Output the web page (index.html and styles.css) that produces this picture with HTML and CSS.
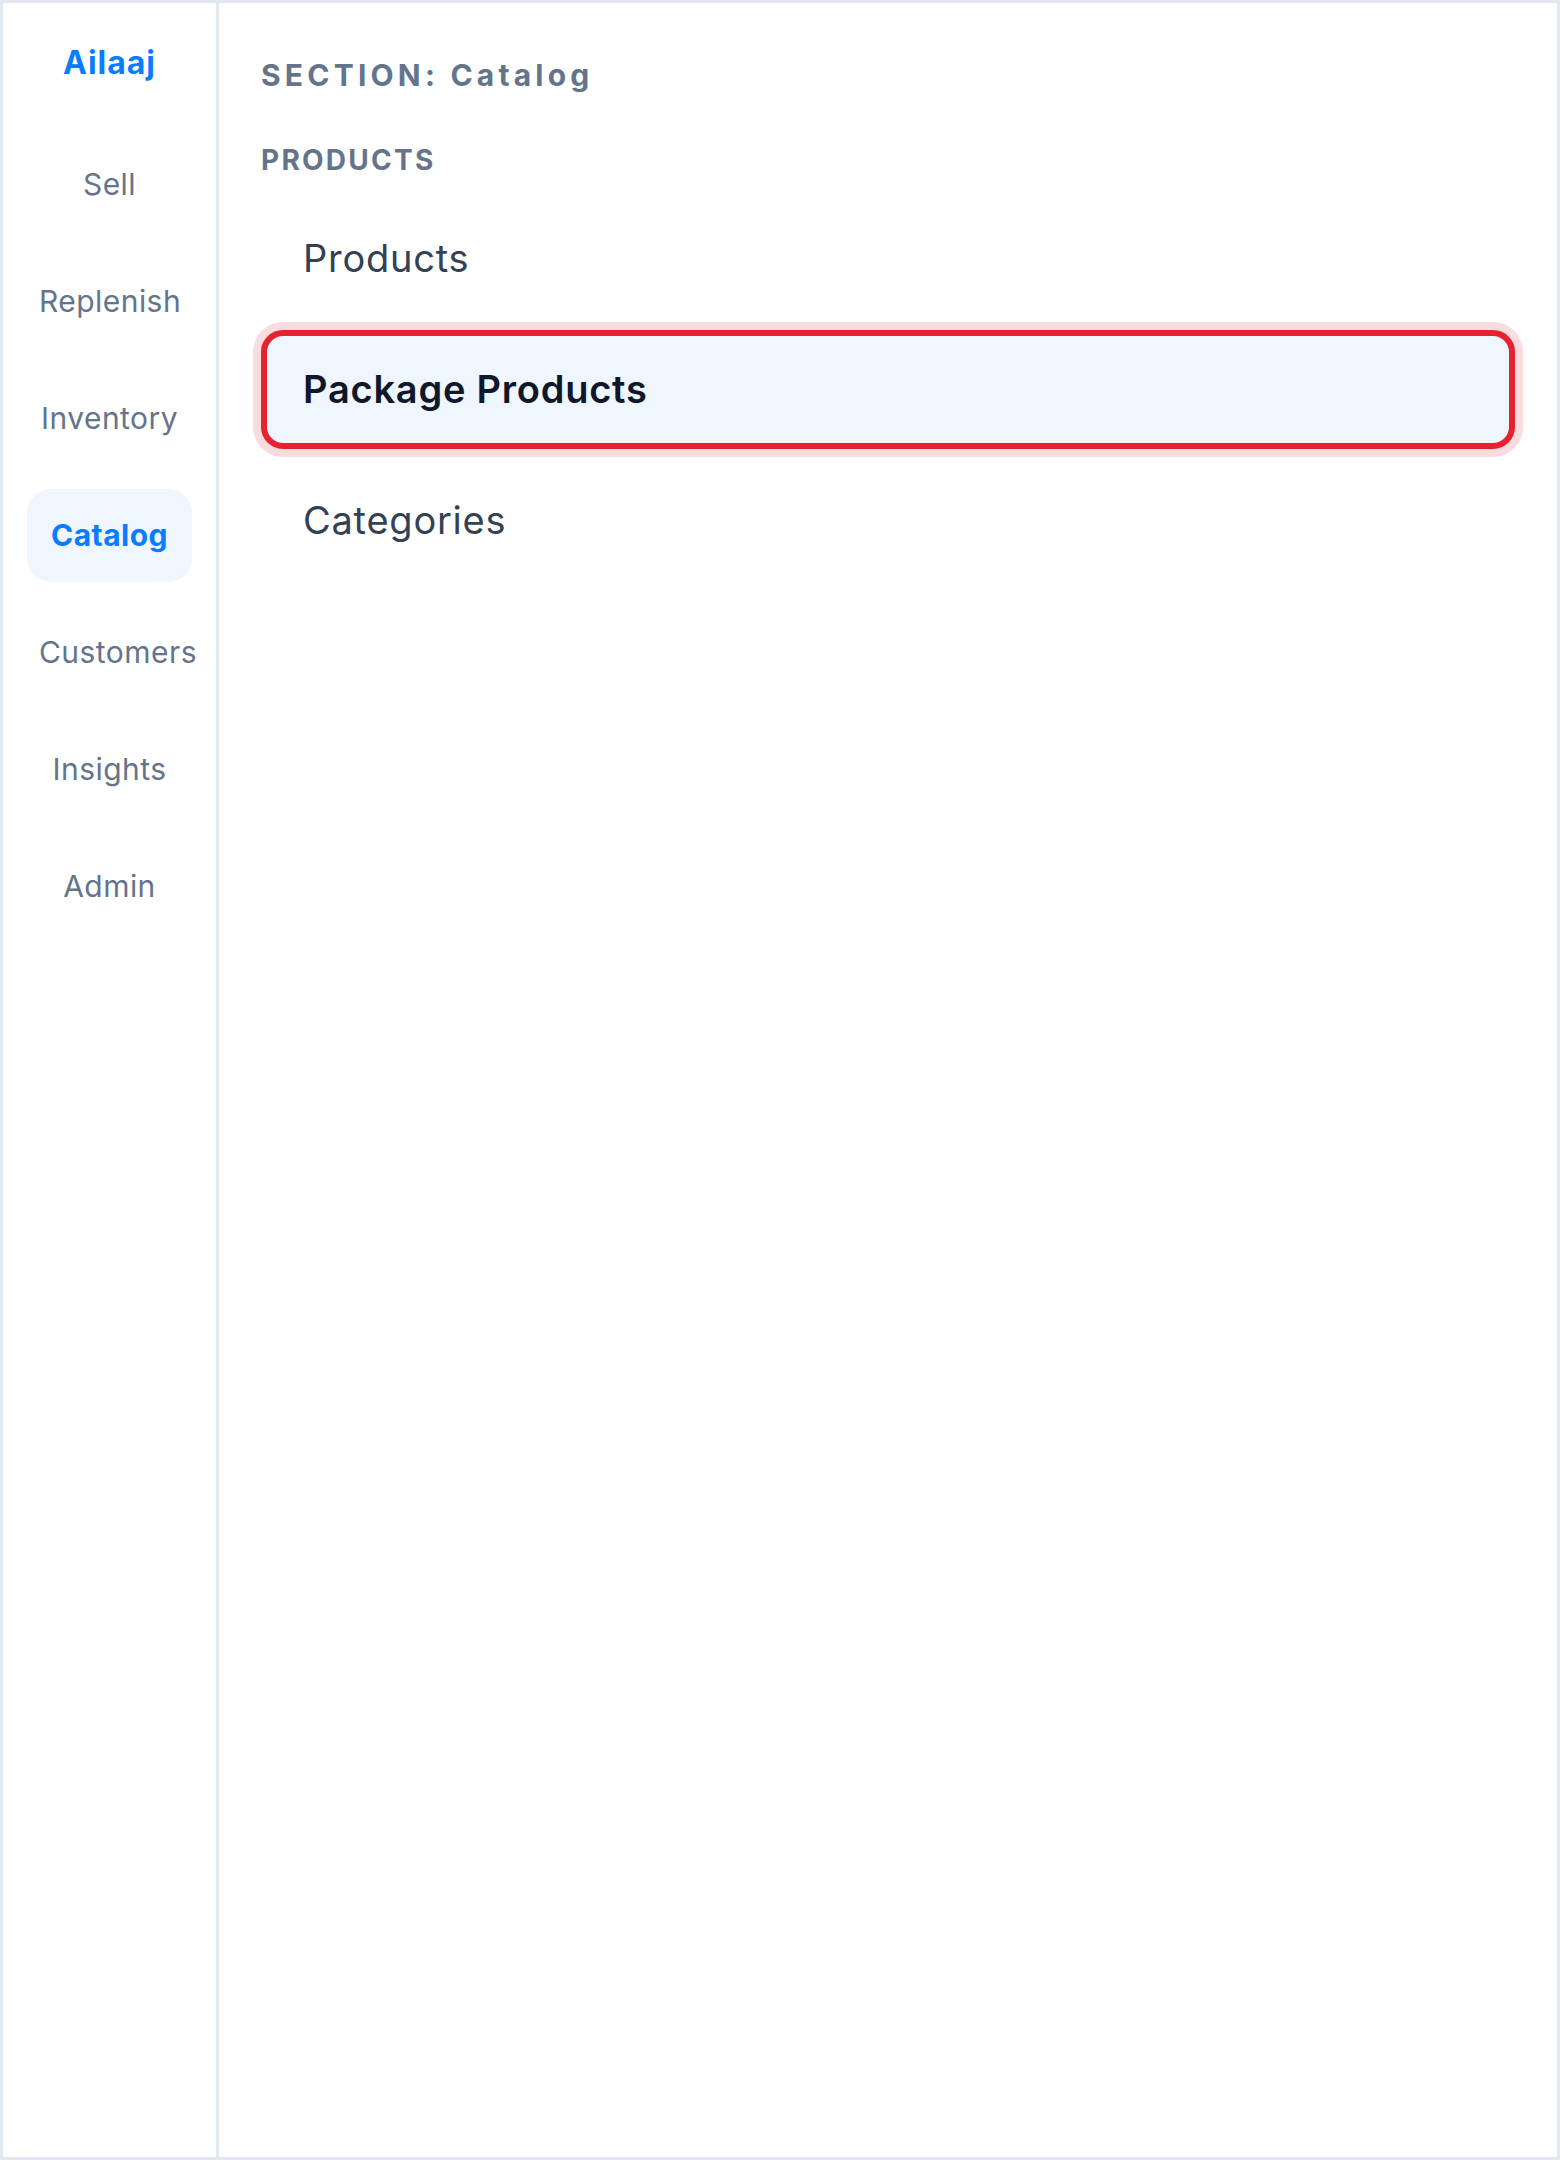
FILE: index.html
```html
<!DOCTYPE html>
<html lang="en">
<head>
<meta charset="utf-8">
<title>Ailaaj - Catalog</title>
<link rel="stylesheet" href="styles.css">
</head>
<body>
<div class="app">
  <aside class="sidebar">
    <div class="brand">Ailaaj</div>
    <nav class="nav">
      <a class="nav-item">Sell</a>
      <a class="nav-item">Replenish</a>
      <a class="nav-item">Inventory</a>
      <a class="nav-item active">Catalog</a>
      <a class="nav-item">Customers</a>
      <a class="nav-item">Insights</a>
      <a class="nav-item">Admin</a>
    </nav>
  </aside>
  <main class="main">
    <h1 class="section-title">SECTION: Catalog</h1>
    <h2 class="group-title">PRODUCTS</h2>
    <ul class="menu">
      <li class="menu-item">Products</li>
      <li class="menu-item selected">Package Products</li>
      <li class="menu-item">Categories</li>
    </ul>
  </main>
</div>
</body>
</html>
```

FILE: styles.css
```css
* { box-sizing: border-box; }

html, body {
  margin: 0;
  padding: 0;
  background: #ffffff;
}

body {
  font-family: Inter, "Noto Sans", "Liberation Sans", sans-serif;
}

.app {
  display: flex;
  width: 1560px;
  height: 2160px;
  border: 3px solid #e2e8f0;
  background: #ffffff;
}

.sidebar {
  flex: 0 0 216px;
  width: 216px;
  min-width: 0;
  border-right: 3px solid #e2e8f0;
  padding: 36px 24px 0;
  display: flex;
  flex-direction: column;
}

.brand {
  font-size: 32px;
  line-height: 48px;
  font-weight: 700;
  letter-spacing: 0.03em;
  color: #0a7cff;
  text-align: center;
  margin-bottom: 51px;
}

.nav {
  display: flex;
  flex-direction: column;
  gap: 24px;
  min-width: 0;
}

.nav-item {
  display: block;
  min-width: 0;
  padding: 24px 12px;
  font-size: 30px;
  line-height: 45px;
  letter-spacing: 0.015em;
  color: #64748b;
  text-align: center;
  white-space: nowrap;
  border-radius: 24px;
  text-decoration: none;
}

.nav-item.active {
  background: #eff6ff;
  color: #0a7cff;
  font-weight: 700;
}

.main {
  flex: 1;
  min-width: 0;
  padding: 50px 42px 0;
}

.section-title {
  margin: 0 0 41px;
  font-size: 30px;
  line-height: 45px;
  font-weight: 700;
  letter-spacing: 0.14em;
  color: #64748b;
}

.group-title {
  margin: 0 0 18px;
  font-size: 28px;
  line-height: 42px;
  font-weight: 700;
  letter-spacing: 0.08em;
  color: #64748b;
}

.menu {
  list-style: none;
  margin: 0;
  padding: 0;
  display: flex;
  flex-direction: column;
  gap: 12px;
}

.menu-item {
  border: 6px solid transparent;
  border-radius: 22px;
  padding: 26px 36px;
  font-size: 38px;
  line-height: 55px;
  letter-spacing: 0.02em;
  color: #334155;
}

.menu-item.selected {
  background: #eff6ff;
  border-color: #e5222e;
  box-shadow: 0 0 0 8px #fadcdf;
  color: #0f172a;
  font-weight: 600;
}
```
